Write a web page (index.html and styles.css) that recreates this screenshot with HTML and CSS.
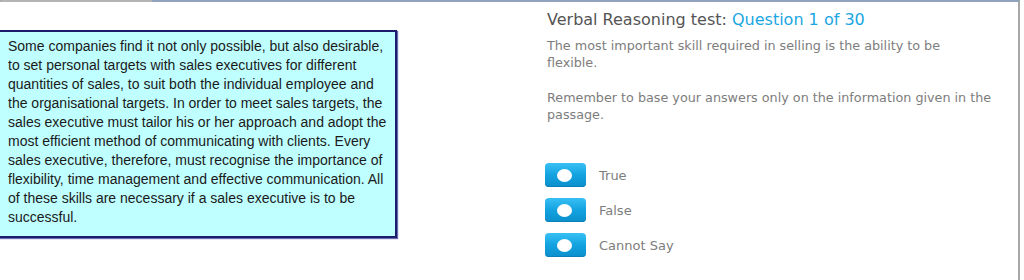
FILE: index.html
```html
<!DOCTYPE html>
<html>
<head>
<meta charset="utf-8">
<link rel="stylesheet" href="styles.css">
</head>
<body>
<div class="frame">
  <div class="passage">
    <p>Some companies find it not only possible, but also desirable,<br>
    to set personal targets with sales executives for different<br>
    quantities of sales, to suit both the individual employee and<br>
    the organisational targets. In order to meet sales targets, the<br>
    sales executive must tailor his or her approach and adopt the<br>
    most efficient method of communicating with clients. Every<br>
    sales executive, therefore, must recognise the importance of<br>
    flexibility, time management and effective communication. All<br>
    of these skills are necessary if a sales executive is to be<br>
    successful.</p>
  </div>
  <div class="question">
    <h1 class="title">Verbal Reasoning test: <span class="qnum">Question 1 of 30</span></h1>
    <p class="statement">The most important skill required in selling is the ability to be<br>flexible.</p>
    <p class="note">Remember to base your answers only on the information given in the<br>passage.</p>
    <ul class="options">
      <li class="option"><span class="toggle"><span class="knob"></span></span><span class="label">True</span></li>
      <li class="option"><span class="toggle"><span class="knob"></span></span><span class="label">False</span></li>
      <li class="option"><span class="toggle"><span class="knob"></span></span><span class="label">Cannot Say</span></li>
    </ul>
  </div>
</div>
</body>
</html>
```
FILE: styles.css
```css
html, body {
  margin: 0;
  padding: 0;
  background: #ffffff;
  overflow: hidden;
}
.frame {
  width: 1020px;
  height: 280px;
  box-sizing: border-box;
  border-right: 2px solid #a8a8a8;
  border-top: 2px solid #8fa3bf;
  display: flex;
  align-items: flex-start;
  position: relative;
}
.frame::before {
  content: "";
  position: absolute;
  left: 0;
  top: -2px;
  width: 152px;
  height: 2px;
  background: #b4b4b4;
  border-top-left-radius: 10px;
}
.passage {
  margin-top: 28px;
  margin-left: -3px;
  width: 400px;
  height: 208px;
  box-sizing: border-box;
  background: #c0ffff;
  border: 2px solid #1c1c6c;
  box-shadow: 1px 1px 1px #6a6ab0;
  padding: 5px 4px 0 9px;
  flex: none;
  overflow: hidden;
}
.passage p {
  margin: 0;
  font-family: "Liberation Sans", Arial, sans-serif;
  font-size: 14px;
  line-height: 19px;
  color: #1a1a1a;
  white-space: nowrap;
}
.question {
  margin-left: 150px;
  width: 460px;
  font-family: "DejaVu Sans", Verdana, sans-serif;
}
.title {
  margin: 8px 0 0 0;
  font-size: 16px;
  line-height: 20px;
  font-weight: normal;
  color: #555555;
}
.qnum {
  color: #1ba6e2;
}
.statement, .note {
  margin: 7px 0 0 0;
  font-size: 12.75px;
  line-height: 17px;
  color: #7d7d7d;
  white-space: nowrap;
}
.note {
  margin-top: 18px;
}
.options {
  list-style: none;
  margin: 40px 0 0 -2px;
  padding: 0;
  display: flex;
  flex-direction: column;
  gap: 11px;
}
.option {
  display: flex;
  align-items: center;
  gap: 13px;
  height: 24px;
}
.toggle {
  width: 41px;
  height: 24px;
  border-radius: 4px;
  background: linear-gradient(to bottom, #38c0f4 0%, #13a2e0 50%, #0b8fcc 100%);
  box-shadow: inset 0 -1px 0 #0a7fb8;
  display: flex;
  align-items: center;
  padding-left: 12px;
  box-sizing: border-box;
}
.knob {
  width: 15px;
  height: 13px;
  border-radius: 50%;
  background: #ffffff;
}
.label {
  font-size: 13px;
  color: #7d7d7d;
}
```
